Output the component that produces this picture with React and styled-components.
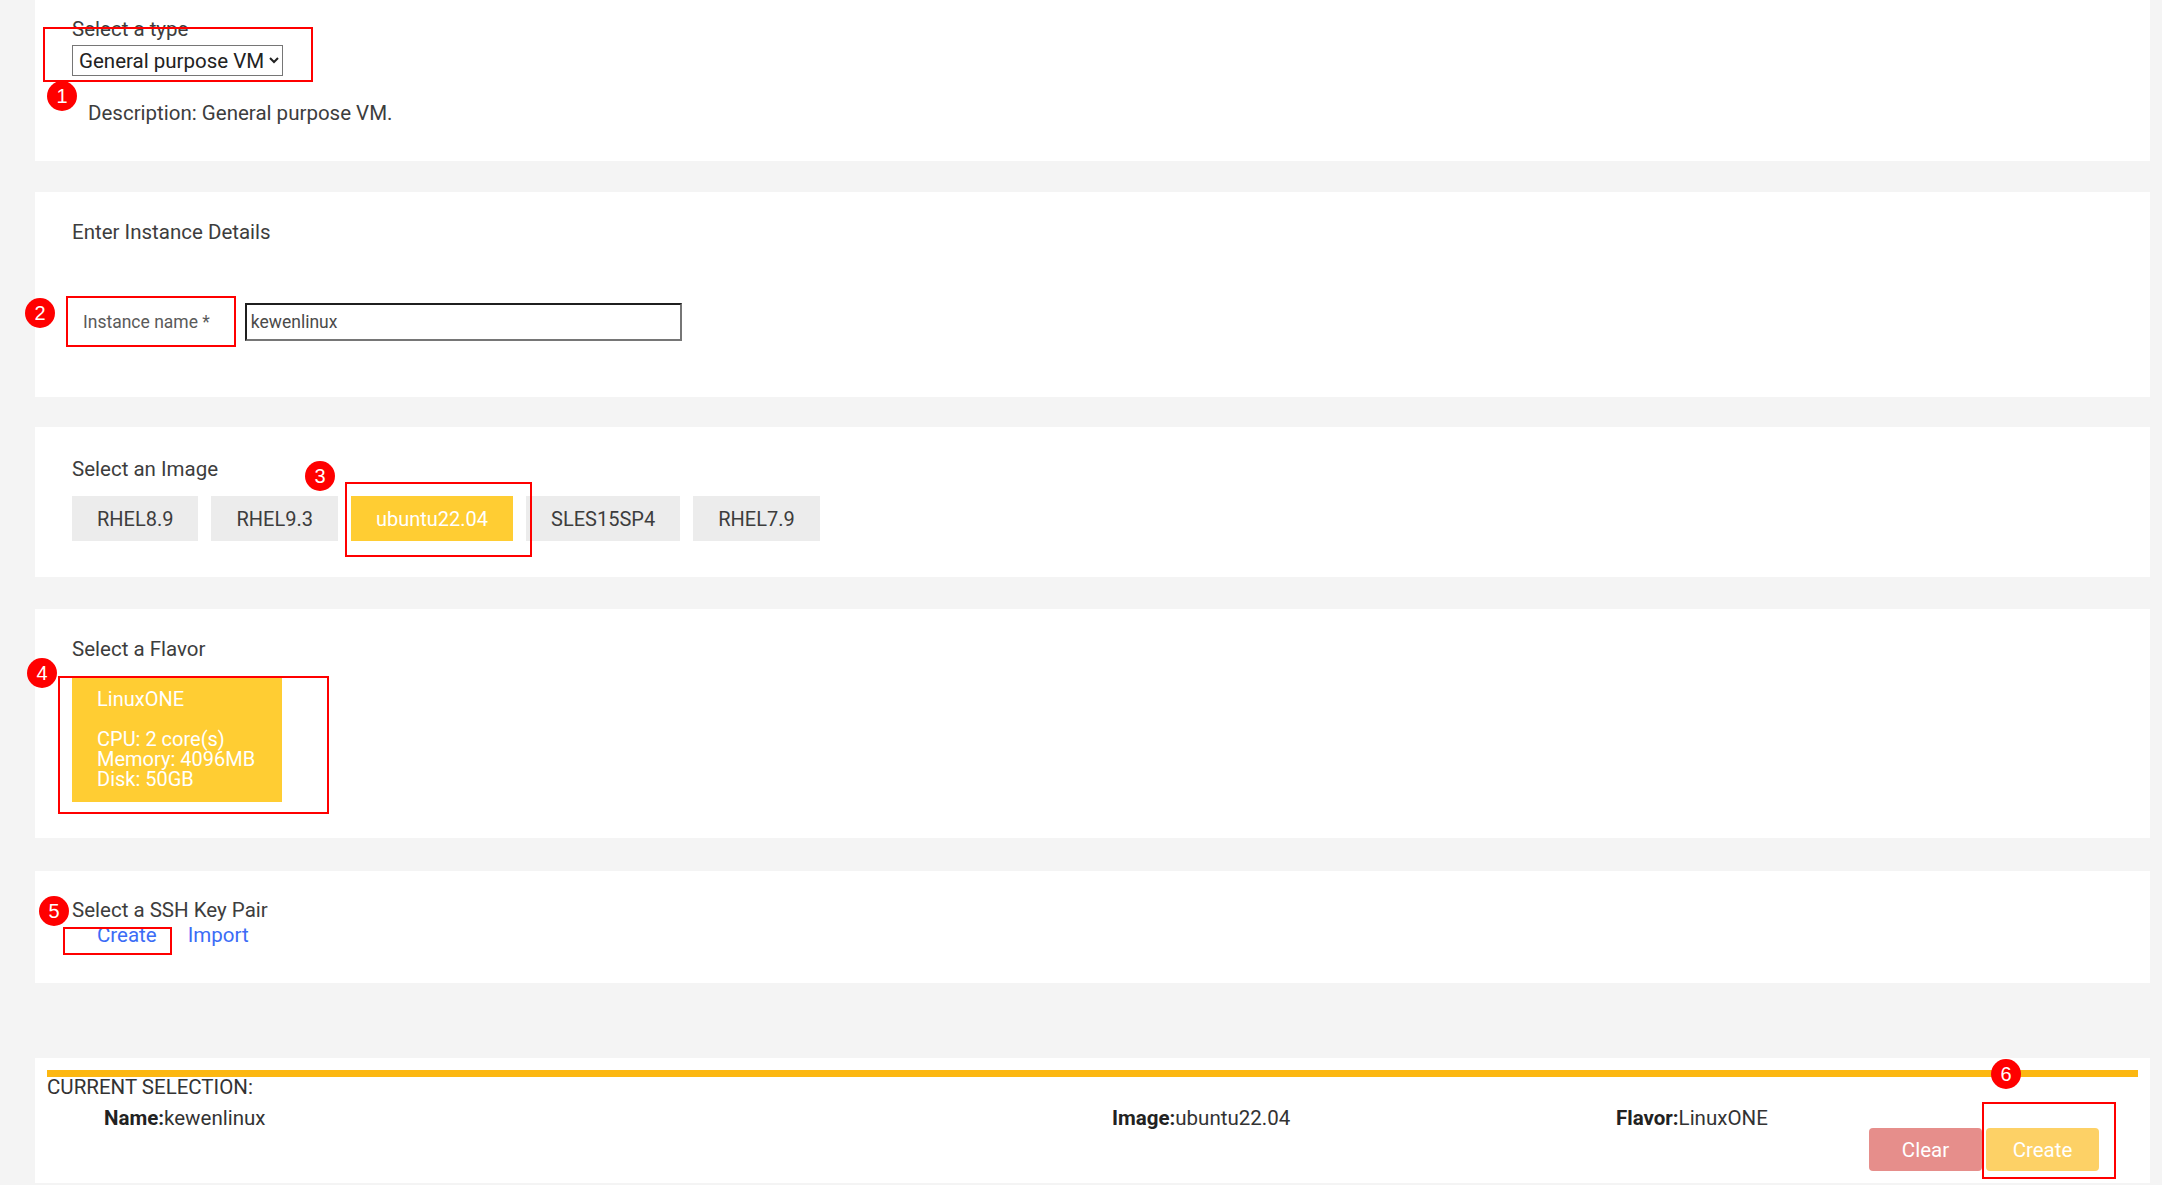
import React from "react";
import styled, { createGlobalStyle } from "styled-components";

const GlobalStyle = createGlobalStyle`
  html, body { margin: 0; padding: 0; background: #f4f4f4; }
  body { font-family: Roboto, "Liberation Sans", Arial, sans-serif; color: #333; }
  * { box-sizing: border-box; }
`;

const Page = styled.div`
  position: relative;
  width: 2162px;
  min-height: 1185px;
  padding: 0 12px 2px 35px;
  display: flex;
  flex-direction: column;
`;

const Panel = styled.section`
  background: #fff;
  margin-top: ${(p) => p.$mt || 0}px;
  padding: ${(p) => p.$pt}px ${(p) => p.$pr ?? 0}px ${(p) => p.$pb}px ${(p) => p.$pl ?? 37}px;
  display: flex;
  flex-direction: column;
`;

const Heading = styled.div`
  font-size: 20.5px;
  line-height: 24px;
  color: #3d3d3d;
`;

const TypeSelect = styled.select`
  margin-top: 4px;
  width: 211px;
  height: 31px;
  font-family: Roboto, "Liberation Sans", Arial, sans-serif;
  font-size: 20.5px;
  color: #222;
  background: #fff;
  border: 1px solid #767676;
  border-radius: 0;
  padding: 0 2px;
`;

const Description = styled.p`
  margin: 25px 0 0 16px;
  font-size: 20.5px;
  line-height: 24px;
  color: #3d3d3d;
`;

const InstanceRow = styled.div`
  margin-top: 59px;
  padding-left: 11px;
  display: flex;
  align-items: center;
  gap: 35px;
  height: 38px;
`;

const FieldLabel = styled.label`
  font-size: 17.5px;
  color: #5a5a5a;
`;

const TextInput = styled.input`
  width: 437px;
  height: 38px;
  padding: 0 4px;
  font-family: Roboto, "Liberation Sans", Arial, sans-serif;
  font-size: 17.5px;
  color: #4a4a4a;
  background: #fff;
  border-top: 2px solid #1f1f1f;
  border-left: 2px solid #1f1f1f;
  border-bottom: 2px solid #767676;
  border-right: 2px solid #767676;
  outline: none;
`;

const ImageRow = styled.div`
  margin-top: 15px;
  display: flex;
  gap: 13px;
`;

const ImageButton = styled.button`
  height: 45px;
  padding: 0 25px;
  border: none;
  font-family: Roboto, "Liberation Sans", Arial, sans-serif;
  font-size: 20px;
  background: ${(p) => (p.$selected ? "#ffcd33" : "#ececec")};
  color: ${(p) => (p.$selected ? "#fff" : "#3d3d3d")};
`;

const FlavorCard = styled.div`
  margin-top: 16px;
  width: 210px;
  height: 125px;
  padding: 12px 0 0 25px;
  background: #ffcd33;
  color: #fff;
  font-size: 20px;
  line-height: 20px;
`;

const FlavorLine = styled.div`
  min-height: 20px;
`;

const LinkRow = styled.div`
  margin-top: 1px;
  padding-left: 25px;
  display: flex;
  gap: 31px;
  font-size: 20.5px;
  line-height: 24px;
`;

const Link = styled.a`
  color: #3b6cf6;
  text-decoration: none;
  cursor: pointer;
`;

const Bar = styled.div`
  height: 7px;
  background: #fcb711;
`;

const SelectionTitle = styled.div`
  font-size: 20.5px;
  line-height: 20px;
  color: #333;
`;

const SummaryRow = styled.div`
  margin-top: 11px;
  padding-left: 57px;
  display: grid;
  grid-template-columns: 1008px 504px auto;
  font-size: 20.5px;
  line-height: 20px;
  color: #333;
`;

const Key = styled.b`
  font-weight: 700;
  color: #222;
`;

const ActionRow = styled.div`
  display: flex;
  justify-content: flex-end;
  gap: 4px;
  padding-right: 39px;
`;

const ActionButton = styled.button`
  width: 113px;
  height: 43px;
  border: none;
  border-radius: 4px;
  font-family: Roboto, "Liberation Sans", Arial, sans-serif;
  font-size: 20.5px;
  color: #fff;
  background: ${(p) => p.$bg};
`;

const Overlay = styled.div`
  position: absolute;
  inset: 0;
  pointer-events: none;
`;

const Box = styled.div`
  position: absolute;
  border: 2px solid #ff0000;
`;

const Badge = styled.div`
  position: absolute;
  width: 30px;
  height: 30px;
  margin: -15px 0 0 -15px;
  border-radius: 50%;
  background: #ff0000;
  color: #fff;
  font-family: "Liberation Sans", Arial, sans-serif;
  font-size: 20px;
  line-height: 30px;
  text-align: center;
`;

const boxes = [
  [43, 27, 270, 55],
  [66, 296, 170, 51],
  [345, 482, 187, 75],
  [58, 676, 271, 138],
  [63, 927, 109, 28],
  [1982, 1102, 134, 77],
];

const badges = [
  [62, 96, 1],
  [40, 313, 2],
  [320, 476, 3],
  [42, 673, 4],
  [54, 911, 5],
  [2006, 1074, 6],
];

const images = ["RHEL8.9", "RHEL9.3", "ubuntu22.04", "SLES15SP4", "RHEL7.9"];

export default function App() {
  return (
    <>
      <GlobalStyle />
      <Page>
        <Panel $pt={17} $pb={36}>
          <Heading>Select a type</Heading>
          <div>
            <TypeSelect defaultValue="gp">
              <option value="gp">General purpose VM</option>
            </TypeSelect>
          </div>
          <Description>Description: General purpose VM.</Description>
        </Panel>

        <Panel $mt={31} $pt={28} $pb={56}>
          <Heading>Enter Instance Details</Heading>
          <InstanceRow>
            <FieldLabel>Instance name *</FieldLabel>
            <TextInput defaultValue="kewenlinux" />
          </InstanceRow>
        </Panel>

        <Panel $mt={30} $pt={30} $pb={36}>
          <Heading>Select an Image</Heading>
          <ImageRow>
            {images.map((img) => (
              <ImageButton key={img} $selected={img === "ubuntu22.04"}>
                {img}
              </ImageButton>
            ))}
          </ImageRow>
        </Panel>

        <Panel $mt={32} $pt={28} $pb={36}>
          <Heading>Select a Flavor</Heading>
          <FlavorCard>
            <FlavorLine>LinuxONE</FlavorLine>
            <FlavorLine />
            <FlavorLine>CPU: 2 core(s)</FlavorLine>
            <FlavorLine>Memory: 4096MB</FlavorLine>
            <FlavorLine>Disk: 50GB</FlavorLine>
          </FlavorCard>
        </Panel>

        <Panel $mt={33} $pt={27} $pb={36}>
          <Heading>Select a SSH Key Pair</Heading>
          <LinkRow>
            <Link>Create</Link>
            <Link>Import</Link>
          </LinkRow>
        </Panel>

        <Panel $mt={75} $pt={12} $pb={12} $pl={12} $pr={12}>
          <Bar />
          <SelectionTitle>CURRENT SELECTION:</SelectionTitle>
          <SummaryRow>
            <span>
              <Key>Name:</Key>kewenlinux
            </span>
            <span>
              <Key>Image:</Key>ubuntu22.04
            </span>
            <span>
              <Key>Flavor:</Key>LinuxONE
            </span>
          </SummaryRow>
          <ActionRow>
            <ActionButton $bg="#e68e8b">Clear</ActionButton>
            <ActionButton $bg="#fdd166">Create</ActionButton>
          </ActionRow>
        </Panel>

        <Overlay>
          {boxes.map(([x, y, w, h], i) => (
            <Box key={i} style={{ left: x, top: y, width: w, height: h }} />
          ))}
          {badges.map(([x, y, n]) => (
            <Badge key={n} style={{ left: x, top: y }}>
              {n}
            </Badge>
          ))}
        </Overlay>
      </Page>
    </>
  );
}
